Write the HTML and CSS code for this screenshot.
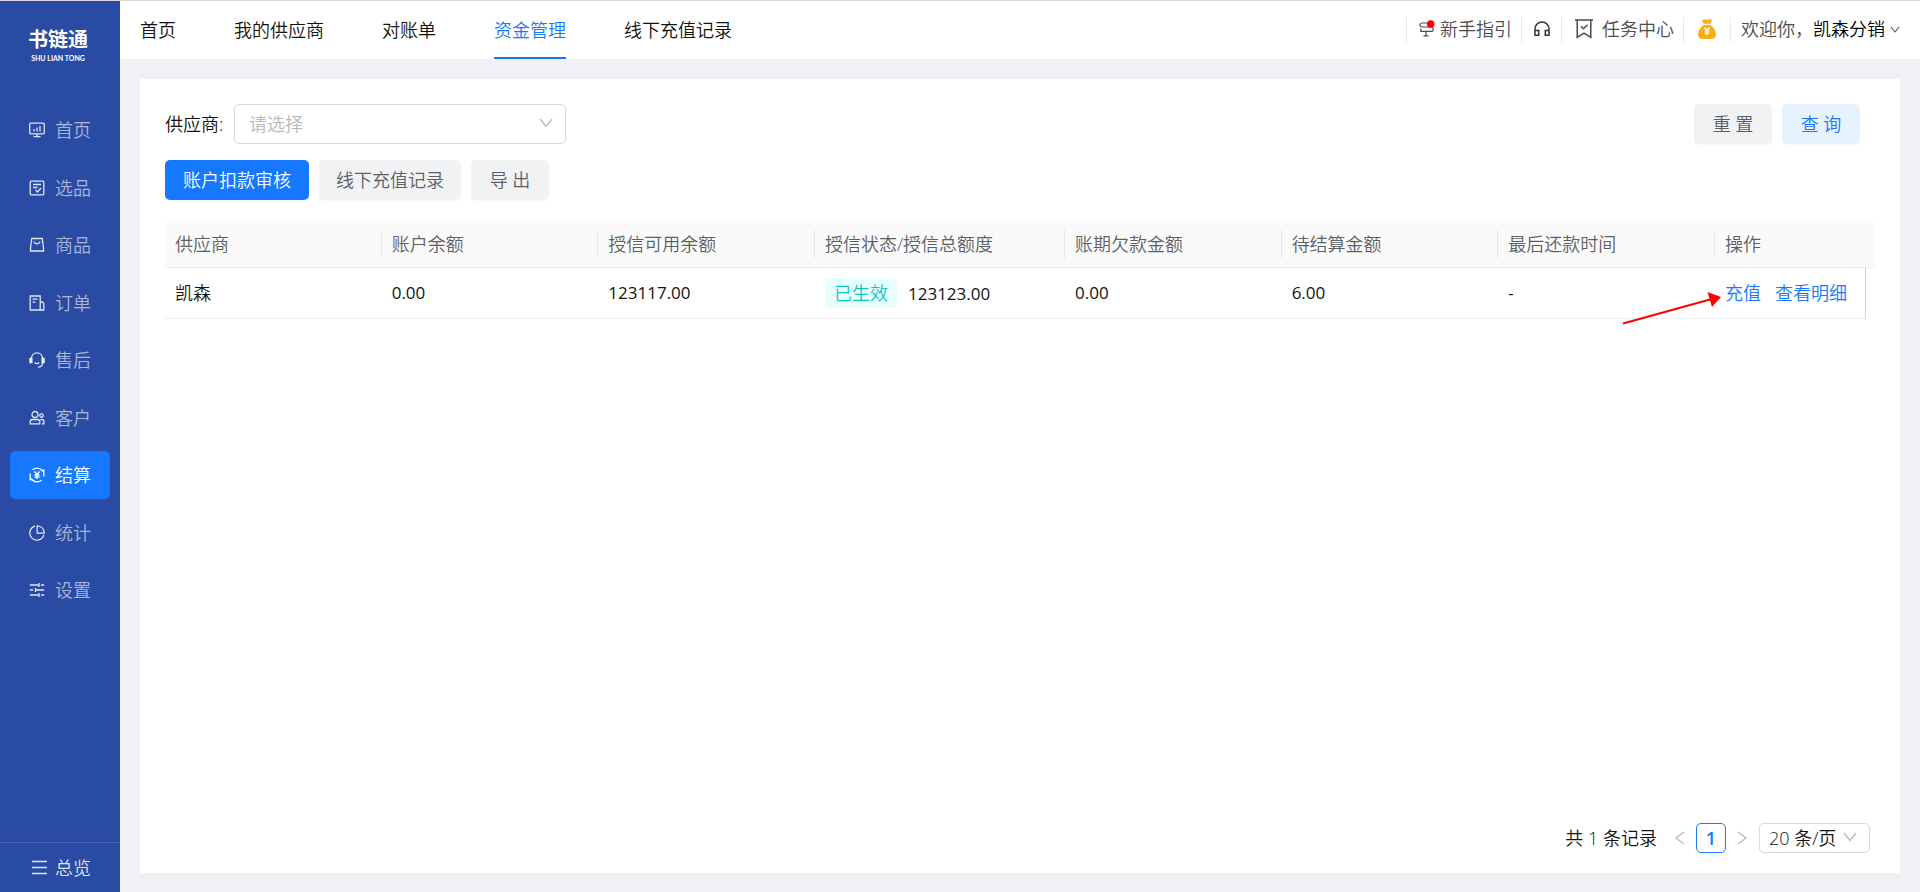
FILE: index.html
```html
<!DOCTYPE html>
<html lang="zh-CN">
<head>
<meta charset="utf-8">
<title>书链通 - 资金管理</title>
<link rel="stylesheet" href="styles.css">
</head>
<body>
<div class="app">
  <aside class="sidebar">
    <div class="logo">
      <span class="logo-name">书链通</span>
      <span class="logo-sub">SHU LIAN TONG</span>
    </div>
    <nav class="menu">
      <a class="menu-item" href="#"><svg class="icon" viewBox="0 0 16 16"><rect x=".7" y="1.2" width="14.6" height="10.6" rx="1"/><path d="M5 9.500V7M8 9.500V5.500M11 9.500V4M8 12v2.500M4.500 14.700h7"/></svg>首页</a>
      <a class="menu-item" href="#"><svg class="icon" viewBox="0 0 16 16"><rect x="1.200" y="1.200" width="13.600" height="13.600" rx="1"/><path d="M4 4.500h8M4 7.500h4.500M6.500 10l2 2 3.500-4"/></svg>选品</a>
      <a class="menu-item" href="#"><svg class="icon" viewBox="0 0 16 16"><path d="M2.800 1.500h10.400l1.300 9.500v3H1.500v-3zM1.500 11v3h13v-3M5 4.500c.5 3 5.500 3 6 0"/></svg>商品</a>
      <a class="menu-item" href="#"><svg class="icon" viewBox="0 0 16 16"><path d="M1.200 1h10v14h-10zM11.200 7h2.300l1.300 1.500V15h-3.600M3.500 4.200h5M3.500 7.200h3"/></svg>订单</a>
      <a class="menu-item" href="#"><svg class="icon" viewBox="0 0 16 16"><path d="M2.500 6.500C2.500 3 5 .9 8 .9s5.500 2.100 5.500 5.600M13.500 10.500c0 3-1.500 4.500-4.500 4.700M5.700 10.500c1.300 1.200 3.300 1.200 4.600 0"/><path d="M.9 6.500h2v4h-2zM13.100 6.500h2v4h-2z" fill="currentColor"/></svg>售后</a>
      <a class="menu-item" href="#"><svg class="icon" viewBox="0 0 16 16"><circle cx="6" cy="4.500" r="3"/><circle cx="12.500" cy="5.500" r="1.700"/><path d="M1.200 13.800v-2c0-1.500 1-2.300 2.500-2.300h4.600c1.500 0 2.500.8 2.500 2.300v2zM11.500 9.500h1.200c1.500 0 2.200.8 2.200 2v2.300h-2"/></svg>客户</a>
      <a class="menu-item is-active" href="#"><svg class="icon" viewBox="0 0 16 16"><path d="M3.500 2.800C6.500.3 11 .6 13.500 4M12.500 13.200C9.500 15.700 5 15.400 2.500 12M1.200 13.500v-7M14.800 9.500v-7M1.200 11l1.800 2M14.800 5 13 3"/><path d="m5.500 4.500 2.500 3 2.500-3M8 7.500V12M5.500 8h5M5.500 10h5"/></svg>结算</a>
      <a class="menu-item" href="#"><svg class="icon" viewBox="0 0 16 16"><path d="M6 1.200a7.100 7.100 0 1 0 8.800 8.600M8.200.9v7.200h7c0-4.200-3-7-7-7.200z"/></svg>统计</a>
      <a class="menu-item" href="#"><svg class="icon" viewBox="0 0 16 16"><path d="M.8 3h8.700M12 3h3.200M10 1v4M.8 8H4M6.500 8h8.700M6.500 6v4M.8 13h8.700M12 13h3.200M10 11v4"/></svg>设置</a>
    </nav>
    <button class="overview" type="button"><svg class="icon" viewBox="0 0 16 16"><path d="M0 1.500h15M0 7.500h15M0 13.500h15"/></svg>总览</button>
  </aside>

  <div class="content">
    <header class="topbar">
      <nav class="tabs">
        <a class="tab" href="#">首页</a>
        <a class="tab" href="#">我的供应商</a>
        <a class="tab" href="#">对账单</a>
        <a class="tab is-active" href="#" aria-current="page">资金管理</a>
        <a class="tab" href="#">线下充值记录</a>
      </nav>
      <div class="tools">
        <a class="tool" href="#"><svg class="icon icon-guide" viewBox="0 0 16 16"><path d="M11 2H3a2 2 0 0 0 0 4h9a2.200 2.200 0 0 1 0 4.400H1.800V7.500M7 10.400v4.400M4.500 14.800h5M11 6V4"/><circle class="dot" cx="11.700" cy="3" r="3.800"/></svg>新手指引</a>
        <a class="tool" href="#" aria-label="客服"><svg class="icon icon-dark" viewBox="0 0 16 16"><path d="M1 14V8a7 7 0 0 1 14 0v6.300h-3.700V9.500H15M1 9.500h3.700v4.800H1V8"/></svg></a>
        <a class="tool tool-task" href="#"><svg class="icon icon-task" viewBox="0 0 18 20"><path d="M0 1h18M2.200 1v17.500L9 14.200l6.800 4.300V1M6 7.200l2.500 2.500 4-4"/></svg>任务中心</a>
        <a class="tool" href="#" aria-label="余额"><svg class="icon icon-bag" viewBox="0 0 18 20"><path d="M4 1.200Q6.500-.4 9 1q2.500-1.400 5 .2L12.300 4.700H5.700z"/><path d="M5.500 5.900h7C16 8.500 18 12 18 15.300 18 18.500 16 20 13 20H5c-3 0-5-1.500-5-4.700C0 12 2 8.500 5.500 5.900z"/><path class="bag-mark" d="m6.500 8.500 2.500 3 2.500-3M9 11.500V16M6.500 12h5M6.500 14h5"/></svg></a>
        <a class="tool tool-user" href="#">欢迎你，<b class="user">凯森分销</b><svg class="icon icon-down" viewBox="0 0 12 8"><path d="m1 1 5 6 5-6"/></svg></a>
      </div>
    </header>

    <main class="card">
      <form class="filter">
        <label class="filter-label" for="supplier">供应商:</label>
        <span class="select-wrap">
          <select class="select" id="supplier"><option>请选择</option></select>
          <svg class="icon select-arrow" viewBox="0 0 12 10"><path d="m0 1 6 7.500L12 1"/></svg>
        </span>
        <span class="filter-actions">
          <button class="btn" type="reset">重 置</button>
          <button class="btn btn-light" type="button">查 询</button>
        </span>
      </form>

      <div class="actions">
        <button class="btn btn-primary" type="button">账户扣款审核</button>
        <button class="btn" type="button">线下充值记录</button>
        <button class="btn" type="button">导 出</button>
      </div>

      <table class="table">
        <colgroup><col><col><col><col class="col-credit"><col><col><col><col class="col-ops"><col class="col-gutter"></colgroup>
        <thead>
          <tr>
            <th><span>供应商</span></th>
            <th><span>账户余额</span></th>
            <th><span>授信可用余额</span></th>
            <th><span>授信状态/授信总额度</span></th>
            <th><span>账期欠款金额</span></th>
            <th><span>待结算金额</span></th>
            <th><span>最后还款时间</span></th>
            <th class="last"><span>操作</span></th>
            <th class="gutter"></th>
          </tr>
        </thead>
        <tbody>
          <tr>
            <td>凯森</td>
            <td class="num">0.00</td>
            <td class="num">123117.00</td>
            <td class="num"><span class="tag">已生效</span>123123.00</td>
            <td class="num">0.00</td>
            <td class="num">6.00</td>
            <td class="num">-</td>
            <td class="ops">
              <a class="link" href="#">充值</a><a class="link" href="#">查看明细</a>
              <svg class="pointer" viewBox="0 0 100 34"><path d="M1 31.500 88 7.500" /><path class="pointer-head" d="M99 5 85.500 0l4.500 15z"/></svg>
            </td>
            <td class="gutter"></td>
          </tr>
        </tbody>
      </table>

      <footer class="pager">
        <span class="total">共 1 条记录</span>
        <button class="page-nav" type="button" aria-label="上一页"><svg class="icon" viewBox="0 0 10 12"><path d="M9 0 1 6l8 6"/></svg></button>
        <button class="page" type="button">1</button>
        <button class="page-nav" type="button" aria-label="下一页"><svg class="icon" viewBox="0 0 10 12"><path d="m1 0 8 6-8 6"/></svg></button>
        <span class="select-wrap size-wrap">
          <select class="select size-select" aria-label="每页条数"><option>20 条/页</option></select>
          <svg class="icon select-arrow" viewBox="0 0 12 10"><path d="m0 1 6 7.500L12 1"/></svg>
        </span>
      </footer>
    </main>
  </div>
</div>
</body>
</html>
```
FILE: styles.css
```css
* { box-sizing: border-box; }

body {
  margin: 0;
  background: #f0f1f5;
  color: #111;
  font: 350 18px/28px "Open Sans", "Noto Sans CJK SC", sans-serif;
}

a { color: inherit; text-decoration: none; }

button, select { font: inherit; color: inherit; }

button { border: 0; padding: 0; background: none; cursor: pointer; }

.app {
  display: flex;
  min-height: 100vh;
  border-top: 1px solid #d9d9d9;
}

.icon {
  display: block;
  flex: none;
  width: 16px;
  height: 16px;
  fill: none;
  stroke: currentColor;
  stroke-width: 1.3;
  overflow: visible;
}

/* Sidebar */
.sidebar {
  display: flex;
  flex-direction: column;
  flex: none;
  width: 120px;
  background: #294ba3;
  color: #fff;
}

.logo {
  display: flex;
  flex-direction: column;
  align-items: center;
  padding: 27px 4px 0 0;
  height: 105px;
}

.logo-name { font-size: 20px; font-weight: 700; line-height: 24px; }

.logo-sub { font: 700 7px/12px Lato, sans-serif; white-space: nowrap; }

.menu {
  display: flex;
  flex-direction: column;
  justify-content: space-between;
  min-height: 508px;
  padding: 0 10px;
}

.menu-item {
  display: flex;
  align-items: center;
  gap: 10px;
  height: 48px;
  padding-left: 19px;
  border-radius: 5px;
  color: rgba(255, 255, 255, .6);
}

.menu-item .icon { color: rgba(255, 255, 255, .85); }

.menu-item.is-active { background: #1677ff; color: #fff; }

.menu-item.is-active .icon { color: #fff; }

.overview {
  display: flex;
  align-items: center;
  gap: 7px;
  height: 50px;
  margin-top: auto;
  padding-left: 32px;
  border-top: 1px solid #4562b0;
  color: rgba(255, 255, 255, .85);
}

/* Top bar */
.content { display: flex; flex-direction: column; flex: 1; min-width: 0; }

.topbar {
  display: flex;
  justify-content: space-between;
  height: 58px;
  padding: 0 20px;
  background: #fff;
}

.tabs { display: flex; gap: 58px; }

.tab { padding-top: 15px; border-bottom: 2px solid transparent; white-space: nowrap; }

.tab.is-active { border-color: #1677ff; color: #1677ff; }

.tools { display: flex; align-items: center; height: 56px; color: #4b4c50; white-space: nowrap; }

.tool {
  display: flex;
  align-items: center;
  gap: 5px;
  height: 25px;
  padding: 0 11px 0 12px;
  border-left: 1px solid #e8e8ea;
}

.tool:first-child { padding-right: 9px; }

.tool-task { gap: 9px; padding-left: 13px; padding-right: 9px; }

.tool-user { gap: 0; padding-left: 10px; padding-right: 0; }

.tool:has(.icon-bag) { padding-left: 14px; padding-right: 14px; }

.icon-guide { stroke-width: 1.2; }

.dot { fill: #f00; stroke: none; }

.icon-dark { color: #333; stroke-width: 1.5; }

.icon-task { width: 18px; height: 20px; stroke-width: 1.5; }

.icon-bag { width: 18px; height: 20px; fill: #faad14; stroke: none; }

.bag-mark { fill: none; stroke: #fff; stroke-width: 1.2; }

.user { font-weight: 350; color: #000; }

.icon-down { width: 10px; height: 7px; margin-left: 5px; }

/* Card */
.card {
  display: flex;
  flex-direction: column;
  flex: 1;
  margin: 20px 20px 19px;
  padding: 25px;
  background: #fff;
}

.filter { display: flex; align-items: center; }

.filter-label { width: 69px; }

.select-wrap { position: relative; display: block; width: 332px; }

.select {
  display: block;
  width: 100%;
  height: 40px;
  padding: 0 14px;
  appearance: none;
  border: 1px solid #d9d9d9;
  border-radius: 5px;
  background: #fff;
  color: #b8b8b8;
}

.select-arrow {
  position: absolute;
  top: 50%;
  right: 14px;
  width: 12px;
  height: 10px;
  margin-top: -6px;
  color: #b8b8b8;
  pointer-events: none;
}

.filter-actions { display: flex; gap: 10px; margin-left: auto; padding-right: 15px; }

.actions { display: flex; gap: 10px; margin: 16px 0 20px; }

.btn {
  min-width: 78px;
  height: 40px;
  padding: 0 17px;
  border-radius: 5px;
  background: #f1f2f4;
  box-shadow: 0 2px 1px rgba(0, 0, 0, .02);
  color: #5c5f66;
}

.btn-primary { padding: 0 18px; background: #1677ff; color: #fff; }

.btn-light { background: #e6f3ff; color: #1677ff; }

/* Table */
.table { width: 100%; table-layout: fixed; border-collapse: separate; border-spacing: 0; }

.col-credit { width: 250px; }

.col-ops { width: 150px; }

.col-gutter { width: 10px; }

.table th {
  height: 48px;
  padding: 0;
  border-bottom: 1px solid #eee;
  background: #fafafa;
  color: #5c5f66;
  font-weight: 350;
  text-align: left;
  white-space: nowrap;
}

.table th:first-child { border-top-left-radius: 5px; }

.table th:last-child { border-top-right-radius: 5px; }

.table th span { display: block; padding-left: 10px; border-right: 1px solid #e6e6e8; }

.table th.last span { border-right: 0; }

.table td {
  height: 51px;
  padding: 0 0 0 10px;
  border-bottom: 1px solid #eee;
  white-space: nowrap;
}

.table td.num { font-size: 17px; font-weight: 400; }

.table td.gutter { border-bottom: 0; border-left: 1px solid #d0d0d0; }

.tag {
  display: inline-block;
  margin-right: 11px;
  padding: 0 9px;
  border-radius: 4px;
  background: #e6fffb;
  color: #13c2c2;
  font-size: 18px;
  font-weight: 350;
  line-height: 30px;
}

.ops { position: relative; }

.link { margin-right: 14px; color: #1677ff; }

.link + .link { margin-right: 0; }

/* Arrow drawn over the row, pointing at the recharge link */
.pointer {
  position: absolute;
  top: 24px;
  left: -93px;
  width: 100px;
  height: 34px;
  fill: none;
  stroke: #f00;
  stroke-width: 2;
  pointer-events: none;
}

.pointer-head { fill: #f00; stroke: none; }

/* Pagination */
.pager {
  display: flex;
  align-items: center;
  justify-content: flex-end;
  margin-top: auto;
  padding: 0 5px;
  margin-bottom: -5px;
}

.total { margin-right: 8px; }

.page-nav { display: grid; place-items: center; width: 30px; height: 30px; color: #b8b8b8; }

.page-nav .icon { width: 10px; height: 12px; }

.page {
  width: 30px;
  height: 30px;
  border: 1px solid #1677ff;
  border-radius: 5px;
  color: #1677ff;
  font-weight: 600;
  line-height: 26px;
  margin: 0 1px;
}

.size-wrap { width: 111px; margin-left: 2px; }

.size-select { height: 30px; padding: 0 9px; color: #111; }
```
